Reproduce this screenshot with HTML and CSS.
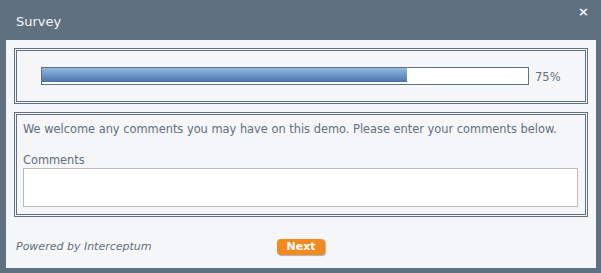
FILE: index.html
```html
<!DOCTYPE html>
<html lang="en">
<head>
    <meta charset="UTF-8">
    <meta name="viewport" content="width=device-width, initial-scale=1.0">
    <title>Survey</title>
    <link rel="stylesheet" href="styles.css">
</head>
<body>
    <div class="window">
        <div class="titlebar">
            <span class="title">Survey</span>
            <span class="close">&times;</span>
        </div>
        <div class="panel">
            <div class="box progress-box">
                <div class="bar">
                    <div class="fill" style="width: 75%"></div>
                </div>
                <span class="percent">75%</span>
            </div>
            <div class="box question-box">
                <p class="intro">We welcome any comments you may have on this demo. Please enter your comments below.</p>
                <label for="comments" class="label">Comments</label>
                <textarea id="comments" class="comments"></textarea>
            </div>
            <div class="footer">
                <span class="powered">Powered by Interceptum</span>
                <button class="next">Next</button>
            </div>
        </div>
    </div>
</body>
</html>
```

FILE: styles.css
```css
body {
    margin: 0;
    background: #5f7180;
    font-family: 'DejaVu Sans', Verdana, sans-serif;
    color: #5f6f80;
}
.window {
    width: 601px;
    height: 273px;
    display: flex;
    flex-direction: column;
}
.titlebar {
    height: 40px;
    display: flex;
    align-items: flex-start;
    justify-content: space-between;
    color: #f4f6f8;
}
.title {
    font-size: 13px;
    margin: 14px 0 0 16px;
}
.close {
    font-size: 13px;
    font-weight: bold;
    margin: 4px 12px 0 0;
}
.panel {
    flex: 1;
    margin: 0 5px 5px 6px;
    background: #f5f6f8;
    padding: 8px 8px 0;
    display: flex;
    flex-direction: column;
}
.box {
    border: 3px double #5f7180;
}
.progress-box {
    height: 50px;
    display: flex;
    align-items: center;
    padding-left: 24px;
}
.bar {
    width: 486px;
    height: 16px;
    border: 1px solid #5f7180;
    background: #fff;
}
.fill {
    height: 14px;
    background: linear-gradient(to bottom, #93b7dd, #6c98c9 50%, #4b72a6);
}
.percent {
    font-size: 11.5px;
    margin-left: 6px;
    margin-top: 2px;
}
.question-box {
    margin-top: 8px;
    padding: 7px 7px 7px 6px;
    display: flex;
    flex-direction: column;
}
.intro {
    margin: 0;
    font-size: 11.4px;
    line-height: 15px;
    white-space: nowrap;
}
.label {
    font-size: 11.4px;
    line-height: 15px;
    margin-top: 16px;
}
.comments {
    height: 37px;
    border: 1px solid #bbbbbb;
    background: #fff;
    resize: none;
    padding: 0;
    margin: 0;
}
.footer {
    flex: 1;
    display: flex;
    align-items: center;
    padding: 8px 0 0 2px;
}
.powered {
    width: 261px;
    font-size: 11px;
    font-style: italic;
}
.next {
    width: 48px;
    height: 16px;
    padding: 0;
    border: none;
    border-radius: 4px;
    background: #f28a1e;
    color: #fff;
    font-family: 'DejaVu Sans', Verdana, sans-serif;
    font-size: 11px;
    font-weight: bold;
    box-shadow: 1px 1px 1px #a9b0b8;
}
```
